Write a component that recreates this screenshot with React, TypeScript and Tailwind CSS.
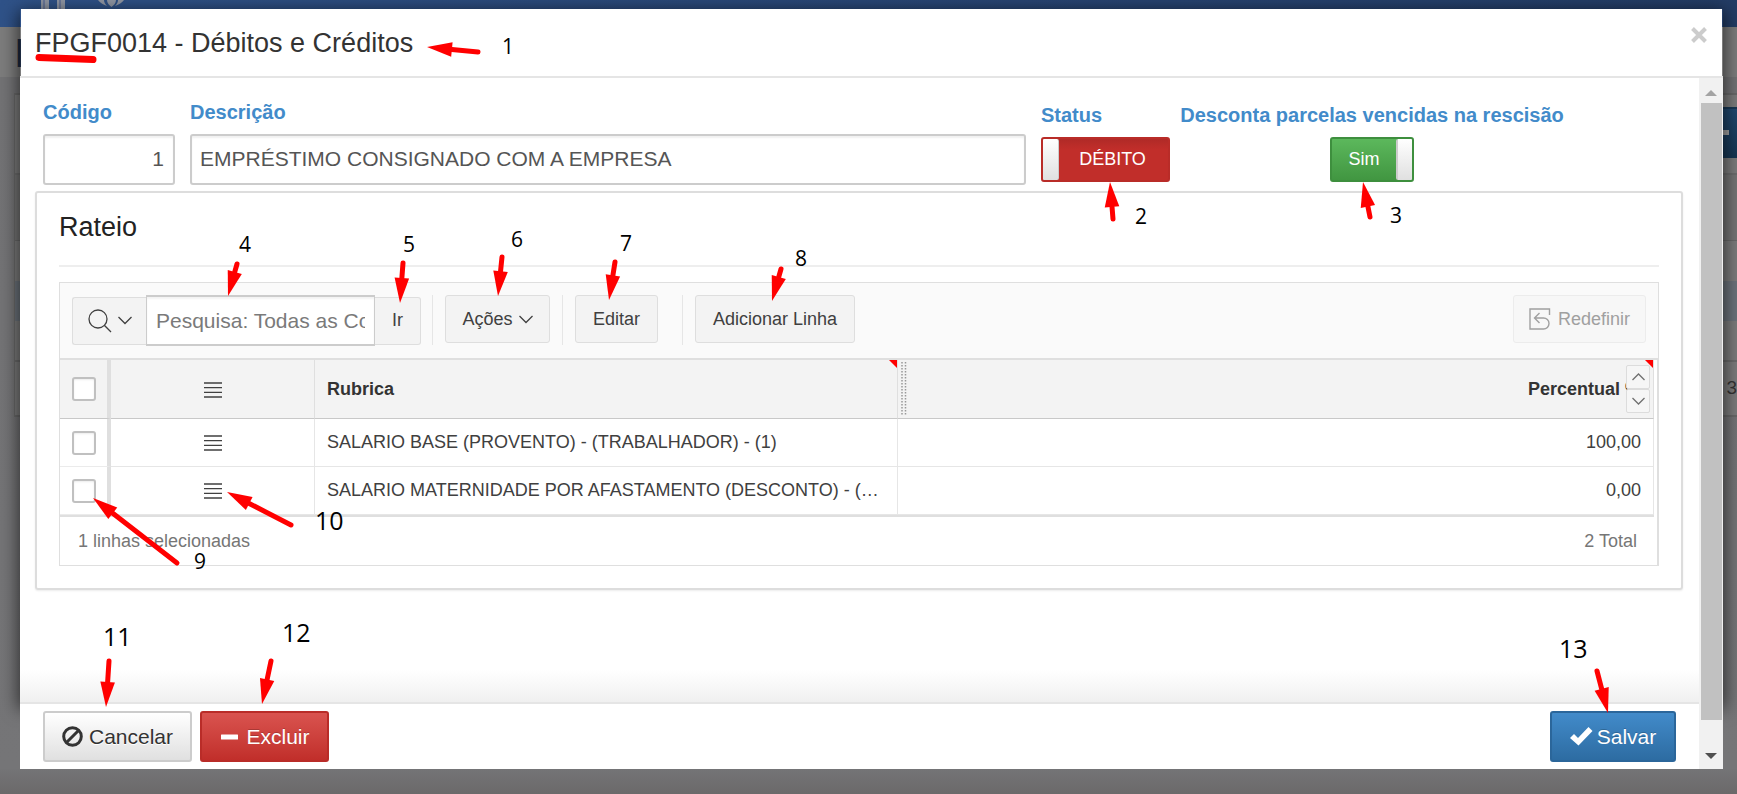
import React from "react";

type Arrow = { tail: [number, number]; tip: [number, number] };
type Note = { text: string; x: number; y: number; large?: boolean };

const arrows: Arrow[] = [
  { tail: [478, 52], tip: [427, 47] },
  { tail: [1113, 219], tip: [1110, 182] },
  { tail: [1370, 217], tip: [1363, 182] },
  { tail: [237, 264], tip: [228, 296] },
  { tail: [403, 263], tip: [400, 303] },
  { tail: [502, 257], tip: [498, 296] },
  { tail: [615, 262], tip: [609, 300] },
  { tail: [781, 269], tip: [772, 301] },
  { tail: [177, 563], tip: [93, 498] },
  { tail: [291, 525], tip: [227, 492] },
  { tail: [109, 661], tip: [106, 707] },
  { tail: [271, 661], tip: [262, 704] },
  { tail: [1597, 671], tip: [1608, 713] },
];

const notes: Note[] = [
  { text: "1", x: 502, y: 54 },
  { text: "2", x: 1135, y: 224 },
  { text: "3", x: 1390, y: 223 },
  { text: "4", x: 239, y: 252 },
  { text: "5", x: 403, y: 252 },
  { text: "6", x: 511, y: 247 },
  { text: "7", x: 620, y: 251 },
  { text: "8", x: 795, y: 266 },
  { text: "9", x: 194, y: 569 },
  { text: "10", x: 315, y: 530, large: true },
  { text: "11", x: 103, y: 646, large: true },
  { text: "12", x: 282, y: 642, large: true },
  { text: "13", x: 1559, y: 658, large: true },
];

const rows = [
  { id: 1, rubrica: "SALARIO BASE (PROVENTO) - (TRABALHADOR) - (1)", percentual: "100,00" },
  { id: 2, rubrica: "SALARIO MATERNIDADE POR AFASTAMENTO (DESCONTO) - (1012)", percentual: "0,00" },
];

function ArrowMark({ tail, tip }: Arrow) {
  const dx = tip[0] - tail[0];
  const dy = tip[1] - tail[1];
  const len = Math.hypot(dx, dy);
  const ux = dx / len;
  const uy = dy / len;
  const bx = tip[0] - ux * 25;
  const by = tip[1] - uy * 25;
  const head = `${tip[0]},${tip[1]} ${bx - uy * 7.3},${by + ux * 7.3} ${bx + uy * 7.3},${by - ux * 7.3}`;
  return (
    <g>
      <line x1={tail[0]} y1={tail[1]} x2={bx} y2={by} stroke="#ff0000" strokeWidth="5" strokeLinecap="round" />
      <polygon points={head} fill="#ff0000" />
    </g>
  );
}

function Annotations() {
  return (
    <svg className="pointer-events-none absolute top-0 left-0 z-20" width="1737" height="794" viewBox="0 0 1737 794">
      <line x1="39" y1="57.5" x2="93" y2="59.5" stroke="#ff0000" strokeWidth="7" strokeLinecap="round" />
      {arrows.map((a, i) => (
        <ArrowMark key={i} {...a} />
      ))}
      {notes.map((n) => (
        <text key={n.text} x={n.x} y={n.y} fill="#000" fontSize={n.large ? 25 : 21} fontFamily='"Open Sans", "Noto Sans", sans-serif'>
          {n.text}
        </text>
      ))}
    </svg>
  );
}

function Backdrop() {
  return (
    <div className="absolute inset-0 flex flex-col overflow-hidden bg-[#747476]" aria-hidden="true">
      <div className="h-[27px] shrink-0 bg-gradient-to-r from-[#2f5288] to-[#233c65] pl-10">
        <svg width="90" height="10" viewBox="0 0 90 10">
          <path d="M1 0h8v10H1zM17 0h8v10h-8z" fill="#8f96a3" />
          <path d="M4 0v10M20 0v10" stroke="#5f6f96" strokeWidth="1.5" />
          <path d="M58 0c2 3 6 5 9 6-2-2-3-4-3-6zM67 0h9c0 3-2 5-4.500 7-2.500-2-4.500-4-4.500-7zM84 0c-2 3-6 5-9 6 2-2 3-4 3-6z" fill="#8f96a3" />
        </svg>
      </div>
      <div className="h-[50px] shrink-0 overflow-hidden bg-[#7c7c7c] pt-1 pl-[15px] text-[40px] leading-[44px] font-bold text-[#1d2a40]">F</div>
      <div className="flex flex-1 flex-col bg-gradient-to-b from-[#727274] to-[#757577] pt-4 pl-[14px]">
        <div className="flex flex-col border-t-2 border-l border-[#686868] bg-[#7b7b7b]">
          <div className="flex h-20 items-start justify-end border-b-2 border-[#6c6c6c] pt-3">
            <div className="flex h-[51px] w-9 items-center justify-end border-y-2 border-[#163653] bg-gradient-to-b from-[#20476e] to-[#173653] pr-2">
              <span className="h-[5px] w-2 bg-[#a0a0a0]" />
            </div>
          </div>
          <div className="h-[66px] border-b border-[#686868] bg-[#747474]" />
          <div className="h-10" />
          <div className="h-10 bg-[#6b727a]" />
          <div className="h-[41px] border-b-2 border-[#6a6a6a]" />
          <div className="flex h-[55px] items-center justify-end border-b-2 border-[#686868] text-[19px] whitespace-nowrap text-[#333]">
            - 3
          </div>
        </div>
      </div>
      <div className="h-[25px] shrink-0 bg-gradient-to-b from-[#747476] to-[#6b696a]" />
    </div>
  );
}

function ChevronDown() {
  return (
    <svg width="14" height="9" viewBox="0 0 14 9" fill="none" stroke="#404040" strokeWidth="1.300">
      <path d="M.5 1l6.500 6.500L13.500 1" />
    </svg>
  );
}

function MenuLines() {
  return (
    <svg width="18" height="16" viewBox="0 0 18 16" stroke="#404040" strokeWidth="1.300">
      <path d="M0 1h18M0 5.600h18M0 10.300h18M0 15h18" />
    </svg>
  );
}

function Separator() {
  return <span className="h-[50px] w-px shrink-0 bg-[#e6e6e6]" />;
}

const toolButton =
  "flex h-12 shrink-0 items-center justify-center rounded-[3px] border border-[#dedede] bg-[#f3f3f3] text-[18px] whitespace-nowrap text-[#404040]";
const checkbox =
  "block size-6 appearance-none rounded-[3px] border-2 border-[#c0c0c0] bg-white shadow-[inset_0_1px_2px_rgba(0,0,0,0.08)]";
const fieldLabel = "block text-[20px] leading-6 font-bold whitespace-nowrap text-[#428bca]";
const fieldInput =
  "mt-[10px] block h-[51px] w-full rounded-[3px] border-2 border-[#ccc] bg-white pb-[2px] text-[21px] text-[#555] shadow-[inset_0_2px_2px_rgba(0,0,0,0.06)] outline-none";
const footerButton = "flex h-[51px] items-center justify-center rounded-[3px] border-2 text-[21px] whitespace-nowrap";

function Fields() {
  return (
    <div className="flex gap-[15px] pt-[22px] pr-[140px] pl-[23px]">
      <div className="w-[132px] shrink-0">
        <label htmlFor="codigo" className={fieldLabel}>Código</label>
        <input id="codigo" defaultValue="1" className={`${fieldInput} pr-[9px] text-right`} />
      </div>
      <div className="min-w-0 flex-1">
        <label htmlFor="descricao" className={fieldLabel}>Descrição</label>
        <input id="descricao" defaultValue="EMPRÉSTIMO CONSIGNADO COM A EMPRESA" className={`${fieldInput} pl-2`} />
      </div>
      <div className="w-[129px] shrink-0 pt-[3px]">
        <label htmlFor="status" className={fieldLabel}>Status</label>
        <button
          id="status"
          type="button"
          role="switch"
          aria-checked="false"
          className="mt-[10px] flex h-[45px] w-full overflow-hidden rounded-[3px] border-2 border-[#b92c28] bg-gradient-to-b from-[#b02a27] via-[#c12e2a] via-25% to-[#c12e2a] text-[18px] text-white"
        >
          <span className="h-full w-4 rounded-r-[2px] border-r border-[#ccc] bg-gradient-to-b from-white to-[#e0e0e0]" />
          <span className="flex h-full flex-1 items-center justify-center pr-[2px]">DÉBITO</span>
        </button>
      </div>
      <div className="flex w-[374px] shrink-0 flex-col items-center pt-[3px]">
        <label htmlFor="desconta" className={fieldLabel}>Desconta parcelas vencidas na rescisão</label>
        <button
          id="desconta"
          type="button"
          role="switch"
          aria-checked="true"
          className="mt-[10px] flex h-[45px] w-[84px] overflow-hidden rounded-[3px] border-2 border-[#3e8f3e] bg-gradient-to-b from-[#5cb85c] to-[#419641] text-[18px] text-white"
        >
          <span className="flex h-full flex-1 items-center justify-center">Sim</span>
          <span className="h-full w-4 rounded-l-[2px] border-l-2 border-[#ccc] bg-gradient-to-b from-white to-[#e0e0e0]" />
        </button>
      </div>
    </div>
  );
}

function Toolbar() {
  return (
    <div className="flex items-start border-b-2 border-[#dfdfdf] bg-[#fafafa] py-3 pr-3 pl-3">
      <div className="flex items-center">
        <button type="button" aria-label="Selecionar colunas para pesquisa" className="flex h-12 w-[74px] items-center justify-center gap-[6px] rounded-l-[3px] border border-r-0 border-[#dedede] bg-[#f3f3f3]">
          <svg width="24" height="24" viewBox="0 0 24 24" fill="none" stroke="#404040" strokeWidth="1.300">
            <circle cx="10" cy="10" r="9" />
            <path d="M16.300 16.300L23 23" />
          </svg>
          <ChevronDown />
        </button>
        <input
          aria-label="Pesquisa"
          placeholder="Pesquisa: Todas as Colunas de Texto"
          className="h-[51px] w-[229px] border border-y-2 border-[#ccc] bg-white px-[9px] text-[21px] text-[#404040] shadow-[inset_0_2px_2px_rgba(0,0,0,0.05)] outline-none placeholder:text-[#7a7a7a]"
        />
        <button type="button" className="flex h-12 w-[46px] items-center justify-center rounded-r-[3px] border border-l-0 border-[#dedede] bg-[#f3f3f3] text-[18px] text-[#404040]">Ir</button>
      </div>
      <div className="flex items-start gap-3 pl-[11px]">
        <Separator />
        <button type="button" className={`${toolButton} w-[105px] gap-[6px]`}>
          Ações
          <ChevronDown />
        </button>
        <Separator />
        <button type="button" className={`${toolButton} w-[83px]`}>Editar</button>
      </div>
      <div className="flex items-start gap-3 pl-6">
        <Separator />
        <button type="button" className={`${toolButton} w-40`}>Adicionar Linha</button>
      </div>
      <button type="button" disabled className="ml-auto flex h-12 w-[133px] shrink-0 items-center justify-center gap-[7px] rounded-[3px] border border-[#ececec] bg-[#f7f7f7] text-[18px] whitespace-nowrap text-[#a0a0a0]">
        <svg width="22" height="22" viewBox="0 0 22 22" fill="none" stroke="#a0a0a0" strokeWidth="1.400">
          <path d="M20.500 7V1H1v20h13.500a5.500 5.500 0 0 0 0-11H5.500M10.500 5L5.500 10l5 5" />
        </svg>
        Redefinir
      </button>
    </div>
  );
}

function Grid() {
  const corner = (
    <svg className="absolute top-0 right-0" width="8" height="8" viewBox="0 0 8 8">
      <path d="M0 0h8v8z" fill="#ff0000" />
    </svg>
  );
  const sortButton = "flex h-6 w-6 items-center justify-center rounded-[2px] border border-[#dcdcdc] bg-[#f6f6f6]";
  return (
    <div className="mt-[15px] border border-[#dfdfdf]">
      <Toolbar />
      <div className="border-r border-[#dfdfdf] pr-[3px]">
        <table className="w-full table-fixed border-separate border-spacing-0 border-b-2 border-[#dfdfdf] text-[18px] text-[#404040]">
          <colgroup>
            <col className="w-[51px]" />
            <col className="w-[204px]" />
            <col className="w-[583px]" />
            <col />
          </colgroup>
          <thead>
            <tr className="h-[59px] bg-[#f3f3f3]">
              <th className="border-r-4 border-b border-r-[#dfdfdf] border-b-[#c8c8c8] p-0 pl-3">
                <input type="checkbox" aria-label="Selecionar todas as linhas" className={checkbox} />
              </th>
              <th className="border-r border-b border-r-[#dfdfdf] border-b-[#c8c8c8] p-0">
                <button type="button" aria-label="Ações da seleção" className="inline-flex align-middle"><MenuLines /></button>
              </th>
              <th className="relative border-r border-b border-r-[#dfdfdf] border-b-[#c8c8c8] px-3 py-0 text-left text-[#333]">
                Rubrica
                {corner}
              </th>
              <th className="relative border-r border-b border-r-[#dfdfdf] border-b-[#c8c8c8] px-3 py-0 text-right text-[#333]">
                Percentual %
                <svg className="absolute top-[2px] left-[3px]" width="6" height="54" viewBox="0 0 6 54">
                  <path d="M1 0v54M4.500 0v54" stroke="#999" strokeWidth="1.500" strokeDasharray="1.500 1.500" />
                </svg>
                {corner}
                <span className="absolute top-[5px] right-[3px] flex flex-col">
                  <button type="button" aria-label="Classificação crescente" className={sortButton}>
                    <svg width="13" height="8" viewBox="0 0 13 8" fill="none" stroke="#707070" strokeWidth="1.300"><path d="M.5 7l6-6 6 6" /></svg>
                  </button>
                  <button type="button" aria-label="Classificação decrescente" className={sortButton}>
                    <svg width="13" height="8" viewBox="0 0 13 8" fill="none" stroke="#707070" strokeWidth="1.300"><path d="M.5 1l6 6 6-6" /></svg>
                  </button>
                </span>
              </th>
            </tr>
          </thead>
          <tbody>
            {rows.map((row) => (
              <tr key={row.id} className="h-12">
                <td className="border-r-4 border-b border-r-[#dfdfdf] border-b-[#ebebeb] p-0 pl-3">
                  <input type="checkbox" aria-label={`Selecionar linha ${row.id}`} className={checkbox} />
                </td>
                <td className="border-r border-b border-[#e6e6e6] p-0 text-center">
                  <button type="button" aria-label="Ações da linha" className="inline-flex align-middle"><MenuLines /></button>
                </td>
                <td className="truncate border-r border-b border-[#e6e6e6] px-3 py-0">{row.rubrica}</td>
                <td className="border-r border-b border-[#e6e6e6] px-3 py-0 text-right">{row.percentual}</td>
              </tr>
            ))}
          </tbody>
        </table>
      </div>
      <div className="flex h-12 items-center justify-between border-r border-[#dfdfdf] pr-5 pl-[18px] text-[18px] text-[#767676]">
        <span>1 linhas selecionadas</span>
        <span>2 Total</span>
      </div>
    </div>
  );
}

function Dialog() {
  return (
    <div role="dialog" aria-labelledby="titulo" className="relative isolate flex flex-1 flex-col">
      <div className="absolute inset-x-0 top-0 bottom-[66px] -z-10 shadow-[0_4px_16px_2px_rgba(0,0,0,0.6)]" />
      <header className="mx-px flex h-[67px] items-start justify-between bg-white pr-[15px] pl-[14px]">
        <h1 id="titulo" className="pt-4 text-[27px] leading-9 text-[#333]">FPGF0014 - Débitos e Créditos</h1>
        <button type="button" aria-label="Fechar" className="mt-[18px] flex">
          <svg width="16" height="16" viewBox="0 0 16 16" stroke="#ccc" strokeWidth="4"><path d="M1.500 1.500l13 13M14.500 1.500l-13 13" /></svg>
        </button>
      </header>
      <div className="flex flex-1 border-t-2 border-[#e5e5e5] bg-white">
        <div className="flex min-w-0 flex-1 flex-col">
          <main className="flex-1">
            <Fields />
            <section className="mt-[6px] mr-4 ml-[15px] rounded-[3px] border-2 border-[#ddd] px-[22px] pt-4 pb-[22px] shadow-[0_1px_2px_rgba(0,0,0,0.08)]">
              <h2 className="border-b-2 border-[#eee] pb-5 text-[27px] leading-9 text-[#222]">Rateio</h2>
              <Grid />
            </section>
          </main>
          <div className="h-8 bg-gradient-to-b from-white to-[#f0f0f0]" />
          <footer className="flex items-center gap-2 border-t-2 border-[#e5e5e5] bg-white px-[23px] py-[7px]">
            <button type="button" className={`${footerButton} w-[149px] gap-[6px] border-[#ccc] bg-gradient-to-b from-white to-[#e0e0e0] text-[#333] [text-shadow:0_1px_0_#fff]`}>
              <svg width="21" height="21" viewBox="0 0 21 21" fill="none" stroke="#333" strokeWidth="3"><circle cx="10.500" cy="10.500" r="8.800" /><path d="M4.500 16.500l12-12" /></svg>
              Cancelar
            </button>
            <button type="button" className={`${footerButton} w-[129px] gap-2 border-[#b92c28] bg-gradient-to-b from-[#d9534f] to-[#c12e2a] pl-[2px] text-white [text-shadow:0_-1px_0_rgba(0,0,0,0.2)]`}>
              <svg width="17" height="6" viewBox="0 0 17 6"><rect width="17" height="5" y="0.500" rx="0.500" fill="#fff" /></svg>
              Excluir
            </button>
            <button type="button" className={`${footerButton} ml-auto w-[126px] gap-1 border-[#2b669a] bg-gradient-to-b from-[#428bca] to-[#2d6ca2] text-white [text-shadow:0_-1px_0_rgba(0,0,0,0.2)]`}>
              <svg width="23" height="19" viewBox="0 0 23 19"><path d="M0 11l4-4 4 4L18.500 0 22.500 4 8.500 18.500z" fill="#fff" /></svg>
              Salvar
            </button>
          </footer>
        </div>
        <div className="flex w-6 flex-col items-center bg-[#f1f1f1]" aria-hidden="true">
          <div className="flex h-[25px] items-center pt-1">
            <svg width="12" height="6" viewBox="0 0 12 6"><path d="M0 6l6-6 6 6z" fill="#a3a3a3" /></svg>
          </div>
          <div className="w-[21px] flex-1 bg-[#c1c1c1]" />
          <div className="flex h-[49px] items-end pb-[10px]">
            <svg width="12" height="6" viewBox="0 0 12 6"><path d="M0 0l6 6 6-6z" fill="#505050" /></svg>
          </div>
        </div>
      </div>
    </div>
  );
}

export default function App() {
  return (
    <div className='relative flex min-h-screen overflow-hidden pt-[9px] pr-[14px] pb-[25px] pl-5 font-["Liberation_Sans",Arial,sans-serif]'>
      <Backdrop />
      <Dialog />
      <Annotations />
    </div>
  );
}
